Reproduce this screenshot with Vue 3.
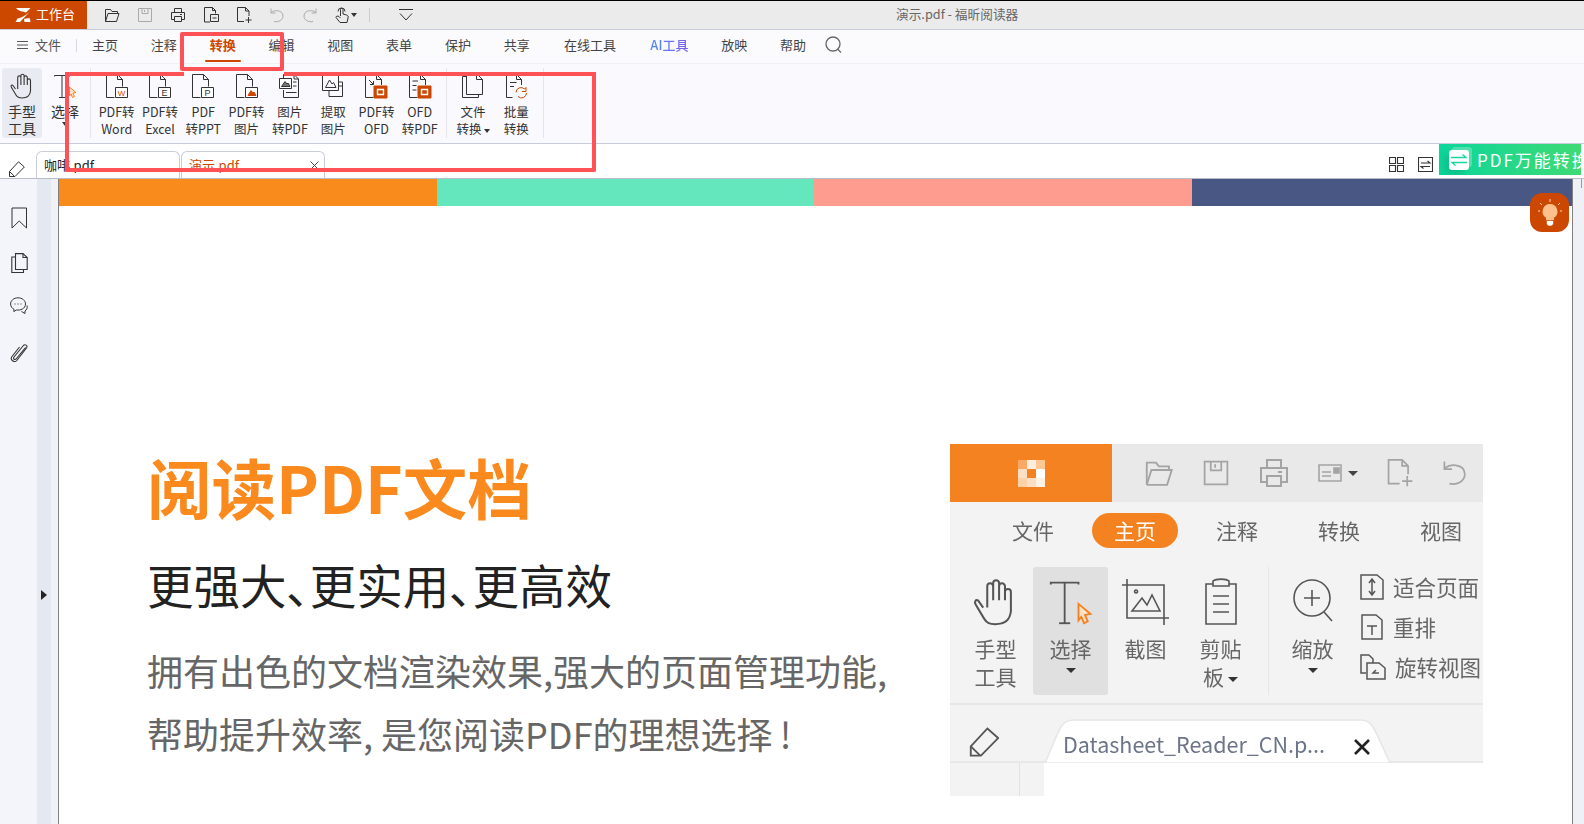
<template>
  <div class="app">
    <header class="titlebar">
      <div class="brand">
        <svg class="brand-logo" width="16" height="16" viewBox="0 0 16 16">
          <path d="M1 1H15.5L11 5.5C8 4.5 4 4.5 1 1Z" fill="#fff" />
          <path d="M15 4.5L5 15H0.5L2.5 11.5C6 11 10 9 15 4.5Z" fill="#fff" />
          <path d="M9 12C11 11.5 13 11 15 11.5L15.5 15H9.5Z" fill="#fff" />
        </svg>
        <span>工作台</span>
      </div>
      <div class="qat">
        <Icon name="folder" />
        <Icon name="save" color="#aaa" />
        <Icon name="print" />
        <Icon name="docMinus" />
        <Icon name="docPlus" />
        <Icon name="undo" color="#aaa" />
        <Icon name="redo" color="#aaa" />
        <div class="qat-hand"><Icon name="touch" /><i class="caret"></i></div>
        <span class="qat-sep"></span>
        <Icon name="chevron" />
      </div>
      <div class="doc-title">演示.pdf - 福昕阅读器</div>
    </header>

    <nav class="menubar">
      <div class="file-menu">
        <svg width="11" height="10" viewBox="0 0 11 10" stroke="#555"><path d="M0 1.5H11M0 5H11M0 8.5H11" /></svg>
        <span>文件</span>
      </div>
      <span class="menu-sep"></span>
      <a
        v-for="m in menus"
        :key="m"
        class="menu-item"
        :class="{ active: m === '转换', ai: m === 'AI工具', wide: m.length === 4 }"
      >{{ m }}</a>
      <Icon class="menu-search" name="search" color="#666" />
    </nav>

    <section class="ribbon">
      <div class="tool hand-tool">
        <Icon name="hand" />
        <div class="tool-label">手型<br />工具</div>
      </div>
      <div class="tool select-tool">
        <Icon name="select" />
        <div class="tool-label">选择<br /><i class="caret"></i></div>
      </div>
      <span class="rib-sep first"></span>
      <div v-for="t in convertTools" :key="t.icon" class="tool">
        <Icon :name="t.icon" />
        <div class="tool-label">{{ t.a }}<br />{{ t.b }}</div>
      </div>
      <span class="rib-sep"></span>
      <div class="tool">
        <Icon name="files" />
        <div class="tool-label">文件<br />转换<i class="caret inline"></i></div>
      </div>
      <div class="tool">
        <Icon name="batch" />
        <div class="tool-label">批量<br />转换</div>
      </div>
      <span class="rib-sep"></span>
    </section>

    <section class="tabbar">
      <Icon class="eraser" name="eraser" />
      <div class="tab"><span>咖啡.pdf</span></div>
      <div class="tab current">
        <span>演示.pdf</span>
        <svg class="tab-close" width="9" height="9" viewBox="0 0 9 9" stroke="#444"><path d="M.5 .5L8.5 8.5M8.5 .5L.5 8.5" /></svg>
      </div>
      <div class="tab-tools">
        <Icon name="grid" />
        <Icon name="swap" />
      </div>
      <div class="promo">
        <div class="promo-icon">
          <svg width="16" height="12" viewBox="0 0 16 12" fill="none" stroke="#18d8a0" stroke-width="1.4">
            <path d="M0 3.5H15L11.5 .5M16 8.5H1L4.5 11.5" />
          </svg>
        </div>
        <span>PDF万能转换</span>
      </div>
    </section>

    <main class="workspace">
      <aside class="sidenav">
        <Icon name="bookmark" />
        <Icon name="pages" />
        <Icon name="comment" />
        <Icon class="side-clip" name="clip" />
      </aside>
      <div class="splitter"><i></i></div>
      <div class="gutter"></div>

      <article class="page">
        <div class="strip">
          <span v-for="c in stripColors" :key="c" :style="{ background: c }"></span>
        </div>
        <div class="page-body">
          <div class="copy">
            <h1>阅读PDF文档</h1>
            <h2>更强大、更实用、更高效</h2>
            <p>拥有出色的文档渲染效果,强大的页面管理功能,<br />帮助提升效率, 是您阅读PDF的理想选择&#8201;!</p>
          </div>

          <figure class="inset">
            <div class="in-top">
              <div class="in-logo">
                <span v-for="(c, i) in logoCells" :key="i" :style="{ background: c }"></span>
              </div>
              <div class="in-qat">
                <Icon name="folder" :scale="1.85" color="#a4a4a4" />
                <Icon name="save" :scale="1.75" color="#a4a4a4" />
                <Icon name="print" :scale="2" color="#a4a4a4" />
                <div class="in-card"><Icon name="card" color="#a4a4a4" /><i class="caret big"></i></div>
                <Icon name="docPlus" :scale="1.7" color="#a4a4a4" />
                <Icon name="undo" :scale="1.7" color="#a4a4a4" />
              </div>
            </div>
            <div class="in-menu">
              <span v-for="m in insetMenus" :key="m" :class="{ on: m === '主页' }">{{ m }}</span>
            </div>
            <div class="in-ribbon">
              <div class="in-tool">
                <Icon name="hand" :scale="1.85" color="#555" />
                <div>手型<br />工具</div>
              </div>
              <div class="in-tool picked">
                <Icon name="select" :scale="1.85" color="#555" />
                <div>选择<br /><i class="caret big"></i></div>
              </div>
              <div class="in-tool">
                <Icon name="crop" color="#555" />
                <div>截图</div>
              </div>
              <div class="in-tool">
                <Icon name="clipboard" color="#555" />
                <div>剪贴<br />板<i class="caret big inline"></i></div>
              </div>
              <span class="in-sep"></span>
              <div class="in-tool">
                <Icon name="zoom" color="#555" />
                <div>缩放<br /><i class="caret big"></i></div>
              </div>
              <ul class="in-list">
                <li><Icon name="fitPage" color="#555" />适合页面</li>
                <li><Icon name="reflow" color="#555" />重排</li>
                <li><Icon name="rotate" color="#555" />旋转视图</li>
              </ul>
            </div>
            <div class="in-tabs">
              <Icon name="eraser" :scale="1.85" color="#555" />
              <div class="in-tab">
                <svg class="in-tab-shape" width="345" height="44" viewBox="0 0 345 44">
                  <path d="M0 44C6 32 10 18 16 8C19 3 22 1.5 28 1H316C322 1.5 325 3 328 8C334 18 339 32 345 44Z" fill="#fff" stroke="#e6e6e6" stroke-width="1.5" />
                </svg>
                <span>Datasheet_Reader_CN.p...</span>
                <svg class="in-tab-x" width="16" height="16" viewBox="0 0 16 16" stroke="#222" stroke-width="2.6"><path d="M1 1L15 15M15 1L1 15" /></svg>
              </div>
            </div>
            <div class="in-foot"><span></span><span></span></div>
          </figure>
        </div>
        <div class="tip">
          <svg width="24" height="28" viewBox="0 0 24 28" fill="none">
            <path d="M12 0V3M2 4L4 6M22 4L20 6M0 12H2M22 12H24" stroke="#ffd9b5" />
            <path d="M12 5a7.5 7.5 0 0 0-4 13.8V21h8v-2.2A7.5 7.5 0 0 0 12 5Z" fill="#fdc08c" />
            <path d="M8.5 21.5h7V25l-2 2h-3l-2-2Z" fill="#fff" stroke="#cc4700" stroke-width=".6" />
          </svg>
        </div>
      </article>
      <div class="scrollbar"><i></i></div>
    </main>

    <div class="mark mark-tab"></div>
    <div class="mark mark-tools"></div>
  </div>
</template>

<script setup>
import { h } from 'vue'

const orange = '#cc4700'

// page outline shared by most of the ribbon icons
const page = ['M9.5 24.5H1.5V1.5H12.5L17.5 6.5V13.5', 'M12.5 1.5V6.5H17.5']
const pageShort = ['M9.5 24.5H1.5V1.5H12.5L17.5 6.5V12', 'M12.5 1.5V6.5H17.5']
const badge = { d: 'M10.5 14.5H22.5V24.5H10.5Z', f: '#fff' }
const orangeBadge = [
  { d: 'M10 13H23V25H10Z', f: orange, s: orange },
  { d: 'M13.5 16.5H19.5V21.5H13.5Z', s: '#fff', sw: 1.4 }
]

const icons = {
  folder: { w: 16, h: 16, p: ['M1.5 14.5V2.5H6.5L8 4.5H13.5V6.5', 'M1.5 14.5H12.5L15 6.5H4L1.5 14.5'] },
  save: { w: 16, h: 16, p: ['M1.5 1.5H14.5V14.5H1.5Z', 'M5 1.5V6.5H11V1.5', 'M7.5 3V5'] },
  print: { w: 16, h: 16, p: ['M4.5 5.5V1.5H11.5V5.5', 'M4.5 12.5H1.5V5.5H14.5V12.5H11.5', 'M4.5 9.5H11.5V14.5H4.5Z', 'M10 7.5H12'] },
  docMinus: { w: 16, h: 16, p: ['M7 15H1.5V.5H9.5L12.5 3.5V6.5', 'M9.5 .5V3.5H12.5', 'M7.5 7.5H15.5V14.5H7.5Z', 'M9.5 11H13.5'] },
  docPlus: { w: 16, h: 16, p: ['M8 14.5H1.5V.5H9.5L13 4V9', 'M9.5 .5V4H13', 'M12.5 10V16M9.5 13H15.5'] },
  undo: { w: 16, h: 16, p: ['M2 1.5V6H6.5', 'M2 6C4 2.5 14 2.5 14 9C14 13 9.5 15.5 5 14.5'] },
  redo: { w: 16, h: 16, p: ['M14 1.5V6H9.5', 'M14 6C12 2.5 2 2.5 2 9C2 13 6.5 15.5 11 14.5'] },
  touch: { w: 14, h: 16, p: ['M5.5 9V2.5a1.25 1.25 0 0 1 2.5 0V7L11.5 8C13 8.5 13.5 9.5 13 11L12 15.5H5L1 10.5C.5 9.5 2.5 8.5 4 9.5L5.5 11', 'M3 4.5a3.5 3.5 0 0 1 7 0'] },
  chevron: { w: 14, h: 12, p: ['M0 .5H14', 'M1 4.5L7 11L13 4.5'] },
  search: { w: 18, h: 18, sw: 1.3, p: ['M15 8a7 7 0 1 1-14 0a7 7 0 0 1 14 0Z', 'M12.5 13L16 16.5'] },
  hand: { w: 24, h: 26, sw: 1.1, p: ['M5.5 16L3 12.5C1.5 11 .5 13 1.5 14.5L6 22C7.5 24.5 9 25 12 25C17 25 20 23 20.5 18V7.5a1.6 1.6 0 0 0-3.2 0V12V4.5a1.6 1.6 0 0 0-3.2 0V12V2.8a1.6 1.6 0 0 0-3.2 0V12V4.5a1.6 1.6 0 0 0-3.2 0V16'] },
  select: { w: 24, h: 26, p: ['M1.5 3.5V2.5H16.5V3.5', 'M9 2.5V24.5', 'M6 24.5H12', { d: 'M16.5 14L23 19.5L20 20L21.5 23.5L19.5 24.5L18 21L16.5 23Z', s: '#f58220', f: '#fde3c9' }] },
  word: { w: 24, h: 26, p: [...page, badge, { t: 'W', x: 16.5, y: 22.5, size: 8, f: orange }] },
  excel: { w: 24, h: 26, p: [...page, badge, { t: 'E', x: 16.5, y: 23, size: 9, f: '#333' }] },
  ppt: { w: 24, h: 26, p: [...page, badge, { t: 'P', x: 16.5, y: 23, size: 9, f: '#333' }] },
  pic: { w: 24, h: 26, p: [...page, badge, { d: 'M13 22.5L16 17.5L18 20L19 19L21 22.5Z', f: orange, s: orange }] },
  imgPdf: { w: 24, h: 26, p: ['M5.5 5V1.5H16L20.5 6V24.5H5.5V17', 'M16 1.5V6H20.5', { d: 'M1.5 5.5H13.5V15.5H1.5Z', f: '#fff' }, { d: 'M3.5 13.5L7 8.5L9 11L10 10L12 13.5Z', f: '#777' }, 'M15 9H18.5M15 13H18.5M8 19.5H18.5'] },
  extract: { w: 24, h: 26, p: ['M1.5 1.5H17.5V17.5H1.5Z', 'M4.5 14.5L8.5 7L11 11L12.5 9.5L15 14.5Z', 'M18 9H21.5V23.5H8V18', 'M18 13H21.5'] },
  pdfOfd: { w: 24, h: 26, p: [...pageShort, 'M5 7L9.5 11.5M9.5 8V11.5H6', ...orangeBadge] },
  ofdPdf: { w: 24, h: 26, p: [...pageShort, 'M4.5 8H10M4.5 12.5H8.5M4.5 17H8.5', ...orangeBadge] },
  files: { w: 24, h: 26, p: ['M5.5 3.5H1.5V24.5H17.5V21', { d: 'M5.5 .5H15.5L21.5 6.5V21.5H5.5Z', f: '#fafafe' }, 'M15.5 .5V6.5H21.5'] },
  batch: { w: 24, h: 26, p: ['M8.5 24.5H2.5V1.5H12.5L17.5 6.5V12', 'M12.5 1.5V6.5H17.5', 'M6 9.5H12.5M6 13.5H10', { d: 'M12 19.5a5 5 0 0 1 8.5-3.5L22 14.5V18.5H18', s: orange }, { d: 'M22.5 20a5 5 0 0 1-8.5 3.5', s: orange }] },
  eraser: { w: 17, h: 16, p: ['M1.5 10.5L10.5 .8L16.3 6L7 15.5H1.5Z', 'M1.5 10.5L6.5 15.3'] },
  grid: { w: 15, h: 15, sw: 1.1, p: ['M.5 .5H6.5V6.5H.5Z', 'M8.5 .5H14.5V6.5H8.5Z', 'M.5 8.5H6.5V14.5H.5Z', 'M8.5 8.5H14.5V14.5H8.5Z'] },
  swap: { w: 15, h: 15, sw: 1.1, p: ['M.5 .5H14.5V14.5H.5Z', 'M3 6H12L9.5 4', 'M12 9.5H3L5.5 11.5'] },
  bookmark: { w: 16, h: 22, p: ['M1 1H15.5V21L8.2 14L1 21Z'] },
  pages: { w: 17, h: 20, sw: 1.1, p: ['M4.5 4H.8V19.5H12.5V16.5', { d: 'M4.5 .6H12L16.2 4.5V16.5H4.5Z', f: '#f3f5fa' }, 'M12 .6V4.5H16.2'] },
  comment: { w: 18, h: 18, p: ['M8 .8C3.8 .8 .6 3.5 .6 7C.6 9.5 2.2 11.4 4 12.3L3.8 14.5L6.5 13C10 13.5 15.5 12 15.5 7C15.5 3.5 12.2 .8 8 .8Z', 'M4.5 7H5.5M7.5 7H8.5M10.5 7H11.5', 'M17 8.5C17.8 11 16.5 13 15 14L15 16.5L11.5 14.5'] },
  clip: { w: 18, h: 21, sw: 1.1, p: ['M15.5 5.5L6.5 16.5C5 18.5 2.5 17 4 15L13 4C15 1.5 18 3.5 16.5 6L6.8 18.5C4.5 21 -.5 18 2 14.5L9.5 5'] },
  card: { w: 24, h: 20, sw: 1.6, p: ['M1 2H23V18H1Z', 'M4 9H13M4 13H13', { d: 'M16 5H21V10H16Z', f: '#a4a4a4' }] },
  crop: { w: 48, h: 48, sw: 1.6, p: ['M5 1V40H47', 'M0 7H42V47', 'M10 33L20 20L25 27L30 17L38 33Z', 'M14 12a1.5 1.5 0 1 0 .1 0'] },
  clipboard: { w: 34, h: 48, sw: 1.6, p: ['M9 6H2V46H32V6H25', 'M9 8V3C12 .5 22 .5 25 3V8H9Z', 'M9 18H25M9 26H25M9 34H25'] },
  zoom: { w: 42, h: 46, sw: 1.6, p: ['M38 19a18 18 0 1 1-36 0a18 18 0 0 1 36 0Z', 'M20 11V27M12 19H28', 'M32 33L40 42'] },
  fitPage: { w: 24, h: 26, sw: 1.5, p: ['M1 1H17L23 6V25H1Z', 'M12 6V20M9 9L12 5L15 9M9 17L12 21L15 17'] },
  reflow: { w: 24, h: 26, sw: 1.5, p: ['M2 1H16L22 6V25H2Z', 'M7 12H17M12 12V21'] },
  rotate: { w: 26, h: 26, sw: 1.5, p: ['M9 1H1V19H6', 'M9 1L13 5V9', { d: 'M7 9H19L25 14V25H7Z' }, 'M19 19H13L16 16'] }
}

// small functional component so the svg markup stays out of the template
const Icon = (props) => {
  const icon = icons[props.name]
  const scale = props.scale || 1
  const children = icon.p.map((item, i) => {
    const part = typeof item === 'string' ? { d: item } : item
    if (part.t) {
      return h('text', {
        key: i,
        x: part.x,
        y: part.y,
        fill: part.f,
        stroke: 'none',
        'font-size': part.size,
        'font-family': 'Liberation Sans, sans-serif',
        'text-anchor': 'middle'
      }, part.t)
    }
    return h('path', { key: i, d: part.d, fill: part.f || 'none', stroke: part.s || undefined, 'stroke-width': part.sw || undefined })
  })
  return h('svg', {
    width: icon.w * scale,
    height: icon.h * scale,
    viewBox: `0 0 ${icon.w} ${icon.h}`,
    fill: 'none',
    stroke: props.color || '#333',
    'stroke-width': icon.sw || 1,
    style: { flex: 'none' }
  }, children)
}
Icon.props = ['name', 'scale', 'color']

const menus = ['主页', '注释', '转换', '编辑', '视图', '表单', '保护', '共享', '在线工具', 'AI工具', '放映', '帮助']

const convertTools = [
  { icon: 'word', a: 'PDF转', b: 'Word' },
  { icon: 'excel', a: 'PDF转', b: 'Excel' },
  { icon: 'ppt', a: 'PDF', b: '转PPT' },
  { icon: 'pic', a: 'PDF转', b: '图片' },
  { icon: 'imgPdf', a: '图片', b: '转PDF' },
  { icon: 'extract', a: '提取', b: '图片' },
  { icon: 'pdfOfd', a: 'PDF转', b: 'OFD' },
  { icon: 'ofdPdf', a: 'OFD', b: '转PDF' }
]

const stripColors = ['#f98a1c', '#64e7bd', '#ff9c90', '#485784']
const insetMenus = ['文件', '主页', '注释', '转换', '视图']
const logoCells = ['#f9a866', '#fdeedd', '#fbc795', '#fde0c4', '#f58220', '#ffffff', '#fdd2a9', '#fde0c4', '#fff3e6']
</script>

<style scoped>
.app {
  position: relative;
  width: 1584px;
  height: 824px;
  overflow: hidden;
  display: flex;
  flex-direction: column;
  border-top: 1px solid #000;
  box-sizing: border-box;
  background: #fff;
  color: #333;
  font-family: "Noto Sans CJK SC", "Noto Sans", sans-serif;
}

.titlebar {
  display: flex;
  align-items: center;
  height: 29px;
  flex: none;
  box-sizing: border-box;
  background: #ebebeb;
  border-bottom: 1px solid #c9cdda;
}
.brand {
  width: 87px;
  height: 100%;
  flex: none;
  display: flex;
  align-items: center;
  gap: 5px;
  padding-left: 15px;
  box-sizing: border-box;
  background: #cc4700;
  color: #fff;
  font-size: 13px;
}
.brand span {
  margin-top: -4px;
}
.qat {
  display: flex;
  align-items: center;
  gap: 17px;
  padding-left: 17px;
  width: 792px;
  box-sizing: border-box;
}
.qat-hand {
  display: flex;
  align-items: center;
  gap: 2px;
  margin-right: -10px;
}
.qat-sep {
  width: 1px;
  height: 14px;
  background: #ccc;
  margin-left: 5px;
}
.qat-sep + svg {
  margin-left: 12px;
}
.doc-title {
  font-size: 12.7px;
  color: #666;
  margin: -4px 0 0 17px;
}
.caret {
  display: inline-block;
  width: 0;
  height: 0;
  border-left: 3.5px solid transparent;
  border-right: 3.5px solid transparent;
  border-top: 4px solid #333;
}
.caret.inline {
  vertical-align: middle;
  margin-left: 2px;
}
.caret.big {
  border-left-width: 5px;
  border-right-width: 5px;
  border-top-width: 5px;
}

.menubar {
  display: flex;
  align-items: center;
  height: 34px;
  flex: none;
  box-sizing: border-box;
  padding-left: 17px;
  background: #fbfbfe;
  border-bottom: 1px solid #f0f0f5;
  font-size: 13px;
  color: #444;
}
.file-menu {
  display: flex;
  align-items: center;
  gap: 7px;
  color: #555;
  padding-bottom: 4px;
}
.menu-sep {
  width: 1px;
  height: 13px;
  background: #d8d8de;
  margin: 0 15px 3px;
}
.menu-item {
  position: relative;
  margin-right: 32.8px;
  line-height: 29px;
  padding-bottom: 4px;
  white-space: nowrap;
}
.menu-item.wide {
  margin-left: 1.5px;
}
.menu-item.active {
  color: #cc4700;
  font-weight: 700;
}
.menu-item.active::after {
  content: "";
  position: absolute;
  left: -5px;
  right: -5px;
  bottom: 1px;
  height: 2px;
  border-radius: 1px;
  background: #cc4700;
}
.menu-item.ai {
  background: linear-gradient(90deg, #4e8cf5, #7a5cf0);
  -webkit-background-clip: text;
  background-clip: text;
  color: transparent;
  font-weight: 500;
}
.menu-search {
  margin: 0 0 3px -14px;
}

.ribbon {
  display: flex;
  height: 80px;
  flex: none;
  padding: 4px 0 0 2px;
  box-sizing: border-box;
  background: #fafafe;
  border-bottom: 1px solid #c9cdda;
}
.tool {
  width: 43.3px;
  flex: none;
  display: flex;
  flex-direction: column;
  align-items: center;
  padding-top: 5px;
  box-sizing: border-box;
}
.hand-tool {
  width: 40px;
  height: 70px;
  background: #e8ebf2;
  border-radius: 3px;
  margin-right: 1px;
}
.select-tool {
  width: 44px;
}
.tool-label {
  margin-top: 4px;
  font-size: 12.5px;
  line-height: 17px;
  text-align: center;
  white-space: nowrap;
  color: #333;
}
.hand-tool .tool-label,
.select-tool .tool-label {
  font-size: 14px;
}
.select-tool .caret {
  display: block;
  margin: 2px auto 0;
}
.rib-sep {
  width: 1px;
  height: 70px;
  margin: 0 4px 0 5px;
  background: #e6e6ea;
  flex: none;
}
.rib-sep.first {
  margin: 0 4px 0 3px;
}

.tabbar {
  position: relative;
  display: flex;
  align-items: flex-end;
  height: 35px;
  flex: none;
  padding-left: 36px;
  box-sizing: border-box;
  background: #fff;
  border-bottom: 1px solid #b9bdc9;
}
.eraser {
  position: absolute;
  left: 8px;
  top: 17px;
}
.tab {
  position: relative;
  width: 144px;
  height: 27px;
  margin-right: 1px;
  padding: 4px 0 0 7px;
  box-sizing: border-box;
  border: 1px solid #c9cdda;
  border-bottom: 0;
  border-radius: 6px 6px 0 0;
  font-size: 13px;
  line-height: 18px;
  color: #222;
}
.tab.current {
  color: #cc4700;
}
.tab-close {
  position: absolute;
  right: 5px;
  top: 9px;
}
.tab-tools {
  display: flex;
  gap: 14px;
  margin-left: auto;
  margin-right: 6px;
  align-self: flex-start;
  padding-top: 13px;
}
.promo {
  width: 142px;
  height: 31px;
  margin-right: 3px;
  align-self: flex-start;
  display: flex;
  align-items: center;
  gap: 8px;
  padding-left: 10px;
  box-sizing: border-box;
  overflow: hidden;
  white-space: nowrap;
  background: linear-gradient(90deg, #0bd69b, #3fda74);
  color: #fff;
  font-size: 17px;
  letter-spacing: 2px;
}
.promo-icon {
  width: 20px;
  height: 20px;
  flex: none;
  display: flex;
  align-items: center;
  justify-content: center;
  background: #fff;
  border-radius: 3px;
  box-shadow: 3px -3px 0 rgba(255, 255, 255, 0.25), -5px 5px 6px rgba(0, 120, 90, 0.2);
}

.workspace {
  flex: 1;
  min-height: 0;
  display: flex;
}
.sidenav {
  width: 37px;
  flex: none;
  display: flex;
  flex-direction: column;
  align-items: center;
  padding: 28px 0 0 1px;
  box-sizing: border-box;
  gap: 24px;
  background: #f3f5fa;
}
.side-clip {
  margin-top: 3px;
}
.splitter {
  width: 14px;
  flex: none;
  background: #e4e8f1;
  padding: 411px 0 0 4px;
  box-sizing: border-box;
}
.splitter i {
  display: block;
  width: 0;
  height: 0;
  border-top: 5px solid transparent;
  border-bottom: 5px solid transparent;
  border-left: 6px solid #222;
}
.gutter {
  width: 7px;
  flex: none;
  background: #f0f2f7;
}
.page {
  position: relative;
  flex: 1;
  min-width: 0;
  border-left: 1px solid #808080;
  border-right: 1px solid #808080;
  background: #fff;
}
.strip {
  display: flex;
  height: 27px;
}
.strip span {
  flex: 0 0 377.7px;
}
.strip span:last-child {
  flex: 1;
}
.page-body {
  display: flex;
  padding: 238px 0 0 88px;
}
.copy {
  width: 803px;
  flex: none;
  margin-top: -3px;
}
.copy h1 {
  margin: 0;
  font-size: 64.5px;
  line-height: 90px;
  font-weight: 700;
  color: #fa8a1e;
}
.copy h2 {
  margin: 21px 0 0;
  font-size: 46.5px;
  line-height: 64px;
  font-weight: 400;
  color: #222;
  font-feature-settings: "palt";
}
.copy p {
  margin: 23px 0 0;
  font-size: 36px;
  line-height: 63px;
  color: #666;
}

.tip {
  position: absolute;
  right: 3px;
  top: 14px;
  width: 39px;
  height: 39px;
  display: flex;
  align-items: center;
  justify-content: center;
  background: #cc4700;
  border-radius: 12px;
}
.scrollbar {
  width: 11px;
  flex: none;
  background: #f0f1f6;
  position: relative;
}
.scrollbar i {
  position: absolute;
  left: 8px;
  top: 0;
  width: 1px;
  height: 9px;
  background: #999;
}

.inset {
  width: 533px;
  height: 352px;
  flex: none;
  margin: 0;
  background: #f3f3f3;
  overflow: hidden;
  display: flex;
  flex-direction: column;
  filter: blur(.4px);
  color: #666;
  font-size: 21px;
}
.in-top {
  display: flex;
  height: 58px;
  flex: none;
  background: #e9e9e9;
}
.in-logo {
  width: 162px;
  flex: none;
  display: grid;
  grid-template-columns: repeat(3, 9px);
  grid-auto-rows: 9px;
  justify-content: center;
  align-content: center;
  background: #f58220;
}
.in-qat {
  display: flex;
  align-items: center;
  gap: 28px;
  padding-left: 32px;
}
.in-card {
  display: flex;
  align-items: center;
  gap: 6px;
}
.in-card .caret {
  border-top-color: #444;
}
.in-menu {
  display: flex;
  gap: 16px;
  padding: 11px 0 0 40px;
  height: 65px;
  flex: none;
  box-sizing: border-box;
}
.in-menu span {
  height: 35px;
  padding: 0 22px;
  line-height: 34px;
  border-radius: 18px;
  white-space: nowrap;
}
.in-menu .on {
  background: #f58220;
  color: #fff;
}
.in-ribbon {
  display: flex;
  height: 138px;
  flex: none;
  padding-left: 8px;
  box-sizing: border-box;
  border-bottom: 2px solid #e6e6e6;
  line-height: 28px;
  text-align: center;
}
.in-tool {
  width: 75px;
  height: 128px;
  flex: none;
  display: flex;
  flex-direction: column;
  align-items: center;
  justify-content: flex-start;
  padding-top: 11px;
  box-sizing: border-box;
}
.in-tool svg {
  height: 48px;
  margin-bottom: 8px;
}
.in-tool.picked {
  background: #e0e0e0;
  border-radius: 3px;
}
.in-tool .caret {
  display: block;
  margin: 6px auto 0;
}
.in-tool .caret.inline {
  display: inline-block;
  margin: 0 0 0 4px;
}
.in-sep {
  width: 1px;
  height: 128px;
  background: #e6e6e6;
  margin: 0 6px 0 10px;
  flex: none;
}
.in-list {
  list-style: none;
  margin: 0 0 0 10px;
  padding: 0;
  font-size: 21.5px;
}
.in-list li {
  display: flex;
  align-items: center;
  gap: 9px;
  height: 40px;
  white-space: nowrap;
}
.in-tabs {
  position: relative;
  height: 58px;
  flex: none;
  display: flex;
  align-items: flex-start;
  padding: 22px 0 0 18px;
  box-sizing: border-box;
  border-bottom: 2px solid #e8e8e8;
}
.in-tab {
  position: absolute;
  left: 95px;
  bottom: -2px;
  width: 345px;
  height: 44px;
  padding: 7px 0 0 18px;
  box-sizing: border-box;
  font-size: 21.5px;
  line-height: 36px;
  color: #6c7488;
  white-space: nowrap;
}
.in-tab-shape {
  position: absolute;
  left: 0;
  top: 0;
}
.in-tab span {
  position: relative;
}
.in-tab-x {
  position: absolute;
  left: 309px;
  top: 20px;
}
.in-foot {
  flex: 1;
  display: flex;
  background: #fff;
}
.in-foot span {
  background: #f3f3f3;
  width: 69px;
  border-right: 1px solid #e2e2e2;
}
.in-foot span + span {
  width: 24px;
  border-right: 0;
}

/* red annotation boxes; the lower one's top edge stops where the upper box sits */
.mark {
  position: absolute;
  box-sizing: border-box;
  border: 4px solid #ff5256;
  border-radius: 2px;
  pointer-events: none;
}
.mark-tab {
  left: 180px;
  top: 31px;
  width: 104px;
  height: 39px;
}
.mark-tools {
  left: 65px;
  top: 71px;
  width: 531px;
  height: 100px;
  border-top: 0;
}
.mark-tools::before,
.mark-tools::after {
  content: "";
  position: absolute;
  top: 0;
  height: 4px;
  background: #ff5256;
}
.mark-tools::before {
  left: -4px;
  width: 119px;
}
.mark-tools::after {
  left: 215px;
  right: -4px;
}
</style>
